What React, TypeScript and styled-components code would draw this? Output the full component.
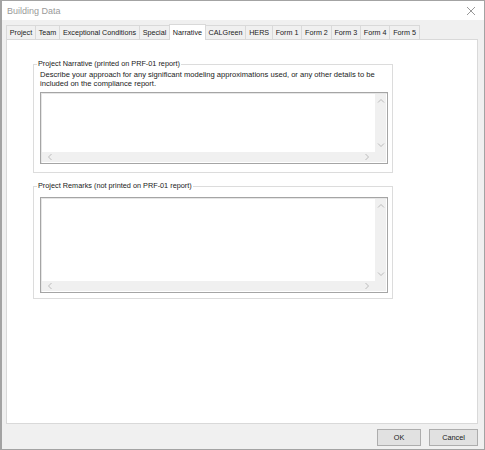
import styled, { createGlobalStyle } from 'styled-components';

const GlobalStyle = createGlobalStyle`
  html, body {
    margin: 0;
    padding: 0;
    background: #ffffff;
  }
  body {
    font-family: 'Liberation Sans', Arial, sans-serif;
  }
`;

const tabs = [
  'Project',
  'Team',
  'Exceptional Conditions',
  'Special',
  'Narrative',
  'CALGreen',
  'HERS',
  'Form 1',
  'Form 2',
  'Form 3',
  'Form 4',
  'Form 5',
];

const Chevron = ({ dir }: { dir: 'up' | 'down' | 'left' | 'right' }) => {
  const paths = {
    up: 'M1 4.5 L4 1.5 L7 4.5',
    down: 'M1 1.5 L4 4.5 L7 1.5',
    left: 'M4.5 1 L1.5 4 L4.5 7',
    right: 'M1.5 1 L4.5 4 L1.5 7',
  };
  const vertical = dir === 'up' || dir === 'down';
  return (
    <svg
      width={vertical ? 8 : 6}
      height={vertical ? 6 : 8}
      viewBox={vertical ? '0 0 8 6' : '0 0 6 8'}
    >
      <path d={paths[dir]} fill="none" stroke="#b4b4b4" strokeWidth="0.9" />
    </svg>
  );
};

const ScrollText = ({ height }: { height: number }) => (
  <TextBox $height={height}>
    <TextContent />
    <VScroll>
      <Chevron dir="up" />
      <Chevron dir="down" />
    </VScroll>
    <HScroll>
      <Chevron dir="left" />
      <Chevron dir="right" />
    </HScroll>
    <Corner />
  </TextBox>
);

export default function App() {
  return (
    <>
      <GlobalStyle />
      <Window>
        <TitleBar>
          <Title>Building Data</Title>
          <CloseButton>
            <svg width="10" height="10" viewBox="0 0 10 10">
              <path d="M1 1 L9 9 M9 1 L1 9" stroke="#8c8c8c" strokeWidth="0.9" />
            </svg>
          </CloseButton>
        </TitleBar>
        <Body>
          <TabStrip>
            {tabs.map((t) => (
              <Tab key={t} $active={t === 'Narrative'}>
                {t}
              </Tab>
            ))}
          </TabStrip>
          <Panel>
            <GroupBox $padTop={1} $padBottom={8}>
              <Legend>Project Narrative (printed on PRF-01 report)</Legend>
              <Description>
                Describe your approach for any significant modeling approximations used, or any other
                details to be included on the compliance report.
              </Description>
              <ScrollText height={72} />
            </GroupBox>
            <GroupBox $padTop={6} $padBottom={5}>
              <Legend>Project Remarks (not printed on PRF-01 report)</Legend>
              <ScrollText height={96} />
            </GroupBox>
          </Panel>
          <Footer>
            <Button $width={44}>OK</Button>
            <Button $width={49}>Cancel</Button>
          </Footer>
        </Body>
      </Window>
    </>
  );
}

const Window = styled.div`
  width: 485px;
  height: 450px;
  box-sizing: border-box;
  border: 1px solid #a3a3a3;
  border-left-width: 2px;
  display: flex;
  flex-direction: column;
  background: #ffffff;
`;

const TitleBar = styled.div`
  height: 19px;
  display: flex;
  align-items: center;
  justify-content: space-between;
  padding: 0 6px 0 5px;
  background: #ffffff;
`;

const Title = styled.span`
  font-size: 9px;
  color: #9a9a9a;
`;

const CloseButton = styled.span`
  display: flex;
  align-items: center;
  margin-right: 2px;
`;

const Body = styled.div`
  flex: 1;
  display: flex;
  flex-direction: column;
  background: #f0f0f0;
  padding: 4px 6px 0 4px;
  min-height: 0;
`;

const TabStrip = styled.div`
  display: flex;
  align-items: flex-end;
  height: 15px;
  position: relative;
  z-index: 1;
`;

const Tab = styled.div<{ $active?: boolean }>`
  box-sizing: border-box;
  height: ${(p) => (p.$active ? 16 : 14)}px;
  margin-bottom: ${(p) => (p.$active ? -1 : 0)}px;
  padding: 0 2.8px;
  display: flex;
  align-items: center;
  font-size: 7.2px;
  color: #1a1a1a;
  white-space: nowrap;
  background: ${(p) => (p.$active ? '#ffffff' : '#f0f0f0')};
  border: 1px solid #d9d9d9;
  border-bottom: none;
  margin-right: -1px;
`;

const Panel = styled.div`
  height: 385px;
  box-sizing: border-box;
  background: #ffffff;
  border: 1px solid #d9d9d9;
  padding: 19px 0 0 26px;
  display: flex;
  flex-direction: column;
  gap: 8px;
`;

const GroupBox = styled.fieldset<{ $padTop: number; $padBottom: number }>`
  width: 360px;
  box-sizing: border-box;
  margin: 0;
  padding: ${(p) => p.$padTop}px 4px ${(p) => p.$padBottom}px 6px;
  border: 1px solid #dcdcdc;
  min-width: 0;
`;

const Legend = styled.legend`
  font-size: 7.3px;
  line-height: 10px;
  color: #1a1a1a;
  padding: 0 1px;
  margin-left: -3px;
`;

const Description = styled.p`
  margin: 0 0 4px 0;
  font-size: 7.6px;
  line-height: 9px;
  color: #1a1a1a;
`;

const TextBox = styled.div<{ $height: number }>`
  height: ${(p) => p.$height}px;
  box-sizing: border-box;
  border: 1px solid #a5a5a5;
  box-shadow: inset 1px 1px 0 #e6e6e6;
  display: grid;
  grid-template-columns: 1fr 11px;
  grid-template-rows: 1fr 10px;
  padding: 1px;
`;

const TextContent = styled.div`
  background: #ffffff;
`;

const VScroll = styled.div`
  background: #f0f0f0;
  display: flex;
  flex-direction: column;
  align-items: center;
  justify-content: space-between;
  padding: 4px 0;
`;

const HScroll = styled.div`
  background: #f0f0f0;
  display: flex;
  align-items: center;
  justify-content: space-between;
  padding: 0 5px;
`;

const Corner = styled.div`
  background: #f0f0f0;
`;

const Footer = styled.div`
  flex: 1;
  display: flex;
  justify-content: flex-end;
  align-items: flex-start;
  gap: 8px;
  padding-top: 5px;
`;

const Button = styled.button<{ $width: number }>`
  width: ${(p) => p.$width}px;
  height: 17px;
  padding: 0;
  background: #e1e1e1;
  border: 1px solid #adadad;
  font-family: 'Liberation Sans', Arial, sans-serif;
  font-size: 7.3px;
  color: #1a1a1a;
`;
